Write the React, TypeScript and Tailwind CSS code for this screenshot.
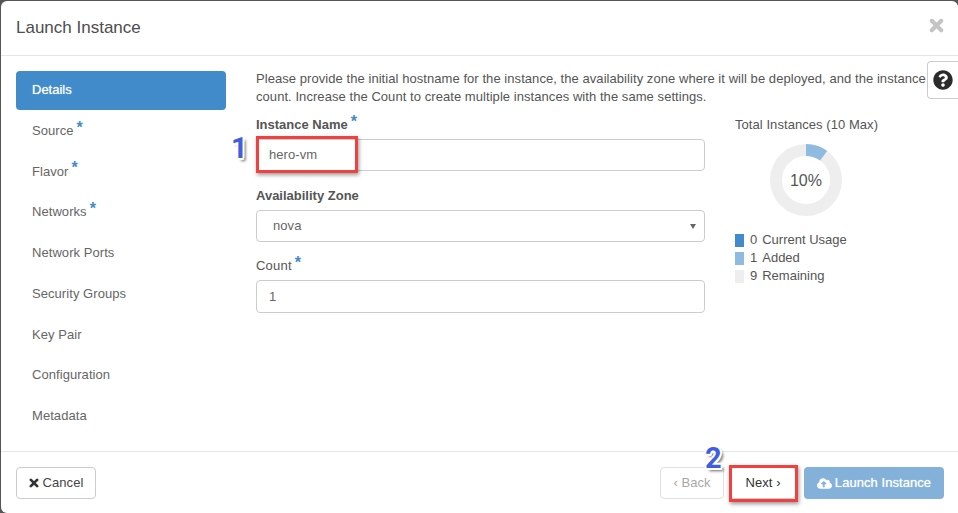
import React from "react";
import { FaQuestionCircle, FaCloudUploadAlt } from "react-icons/fa";

const steps: { label: string; req?: boolean }[] = [
  { label: "Source", req: true },
  { label: "Flavor", req: true },
  { label: "Networks", req: true },
  { label: "Network Ports" },
  { label: "Security Groups" },
  { label: "Key Pair" },
  { label: "Configuration" },
  { label: "Metadata" },
];

function Star() {
  return <span className="text-[#428bca] text-[16px] font-bold leading-none relative -top-[3px] ml-[3px]">*</span>;
}

function Times({ className }: { className: string }) {
  return (
    <svg viewBox="0 0 14 14" className={className} aria-hidden="true">
      <path d="M2.6 2.6L11.4 11.4M11.4 2.6L2.6 11.4" stroke="currentColor" strokeWidth="3.8" strokeLinecap="round" fill="none" />
    </svg>
  );
}

function Callout({ n, className }: { n: string; className: string }) {
  return (
    <span
      className={"absolute font-bold text-[#3f5fe0] text-[29px] leading-none " + className}
      style={{
        fontFamily: "Roboto, sans-serif",
        textShadow:
          "2px 0 0 #fff, -2px 0 0 #fff, 0 2px 0 #fff, 0 -2px 0 #fff, 1.5px 1.5px 0 #fff, -1.5px 1.5px 0 #fff, 1.5px -1.5px 0 #fff, -1.5px -1.5px 0 #fff, 3px 3px 3px rgba(0,0,0,.6)",
      }}
    >
      {n}
    </span>
  );
}

export default function App() {
  return (
    <div className="w-[958px] h-[513px] bg-[#555] pl-px pt-px overflow-hidden text-[13px] tracking-[0.06px] text-[#555] relative" style={{ fontFamily: '"Liberation Sans", Arial, sans-serif' }}>
      <div className="w-[957px] h-[512px] bg-white rounded-tl-[6px] rounded-tr-[6px] rounded-bl-[6px] flex flex-col relative">
        <header className="h-[55px] shrink-0 border-b border-[#e5e5e5] flex items-center justify-between pl-[15px] pr-[14px]">
          <h4 className="text-[17px] text-[#4d4d4d] tracking-normal">Launch Instance</h4>
          <Times className="text-[#c4c4c4] w-[15px] h-[15px] relative -top-[3px]" />
        </header>

        <div className="flex-1 flex pl-[15px] pt-[15px] relative min-h-0">
          <nav className="w-[210px] shrink-0">
            <div className="h-[39px] rounded-[4px] bg-[#428bca] text-white flex items-center pl-4 pb-px tracking-normal mb-[0.2px] [text-shadow:0_0_1px_rgba(255,255,255,0.7)]">Details</div>
            {steps.map((s) => (
              <div key={s.label} className="h-[40.75px] flex items-center pl-4 text-[#666]">
                {s.label}
                {s.req && <Star />}
              </div>
            ))}
          </nav>

          <main className="pl-[30px] flex-1 min-w-0">
            <p className="w-[672px] leading-[18px] text-[#555] mt-[-1px]">
              Please provide the initial hostname for the instance, the availability zone where it will be deployed, and the instance count. Increase the Count to create multiple instances with the same settings.
            </p>
            <div className="flex mt-[6px]">
              <div className="w-[449px] shrink-0">
                <label className="flex items-center h-[18px] font-bold tracking-normal mb-[5px] mt-[4px]">
                  Instance Name<Star />
                </label>
                <div className="h-[32px] border border-[#ccc] rounded-[4px] flex items-center pl-3 text-[#666]">hero-vm</div>
                <label className="flex items-center h-[18px] font-bold tracking-normal mt-[16px] mb-[5px]">Availability Zone</label>
                <div className="h-[32px] border border-[#ccc] rounded-[4px] flex items-center justify-between pl-4 pr-[8px] text-[#666]">
                  nova
                  <svg width="6" height="6" viewBox="0 0 6 6"><path d="M0 1h6L3 6z" fill="#666" /></svg>
                </div>
                <label className="flex items-center h-[18px] mt-[15px] mb-[5px] text-[#555] tracking-[0.2px]">
                  Count<Star />
                </label>
                <div className="h-[33px] border border-[#ccc] rounded-[4px] flex items-center pl-3 text-[#666]">1</div>
              </div>

              <aside className="ml-[30px] w-[190px]">
                <div className="h-[18px] leading-[18px] text-[#555] mt-[4px]">Total Instances (10 Max)</div>
                <svg width="72" height="72" viewBox="0 0 72 72" className="mt-[10px] ml-[35px]">
                  <circle cx="36" cy="36" r="30" fill="none" stroke="#eeeeee" strokeWidth="12" />
                  <path d="M36 0A36 36 0 0 1 57.2 6.9L50.1 16.6A24 24 0 0 0 36 12Z" fill="#90bbe0" />
                  <text x="36" y="41.5" textAnchor="middle" fontSize="16" fill="#555" fontFamily="Liberation Sans">10%</text>
                </svg>
                <ul className="mt-[15px] leading-[18px] tracking-normal">
                  <li className="flex items-center h-[18px]"><i className="w-[9px] h-[13px] bg-[#428bca] mr-[6px]" />0<span className="ml-[5px]">Current Usage</span></li>
                  <li className="flex items-center h-[18px]"><i className="w-[9px] h-[13px] bg-[#90bbe0] mr-[6px]" />1<span className="ml-[5px]">Added</span></li>
                  <li className="flex items-center h-[18px]"><i className="w-[9px] h-[13px] bg-[#eeeeee] mr-[6px]" />9<span className="ml-[5px]">Remaining</span></li>
                </ul>
              </aside>
            </div>
          </main>

          <div className="absolute right-0 top-[5px] w-[31px] h-[38px] bg-white border border-[#ccc] border-r-0 rounded-l-[4px] flex items-center justify-center">
            <FaQuestionCircle className="w-[20px] h-[20px] text-[#2b2b2b]" />
          </div>
        </div>

        <footer className="h-[62px] shrink-0 border-t border-[#e5e5e5] flex items-start justify-between pt-[15px] pl-[15px] pr-[14px]">
          <button className="h-[32px] w-[80px] border border-[#ccc] rounded-[4px] text-[#444] flex items-center justify-center gap-[4px]">
            <Times className="w-[10px] h-[10px] text-[#333]" />Cancel
          </button>
          <div className="flex">
            <button className="h-[32px] w-[64px] border border-[#e0e0e0] rounded-[4px] text-[#a8a8a8] flex items-center justify-center">‹ Back</button>
            <button className="h-[32px] w-[67px] ml-[5px] border border-[#ccc] rounded-[4px] text-[#333] flex items-center justify-center pl-px">Next ›</button>
            <button className="h-[32px] w-[140px] ml-[8px] rounded-[4px] bg-[#84b1d9] text-white flex items-center justify-center gap-[3px] [text-shadow:0_0_1px_rgba(255,255,255,0.7)]">
              <FaCloudUploadAlt className="w-[15px] h-[15px]" />Launch Instance
            </button>
          </div>
        </footer>
      </div>

      <div className="absolute left-[256px] top-[136px] w-[102px] h-[37px] border-[3px] border-[#f04040] shadow-[1px_2px_4px_rgba(0,0,0,0.4)]" />
      <div className="absolute left-[729px] top-[465px] w-[69px] h-[37px] border-[3px] border-[#f04040] shadow-[1px_2px_4px_rgba(0,0,0,0.4)]" />
      <Callout n="1" className="left-[231px] top-[134px]" />
      <Callout n="2" className="left-[705px] top-[444px]" />
    </div>
  );
}
